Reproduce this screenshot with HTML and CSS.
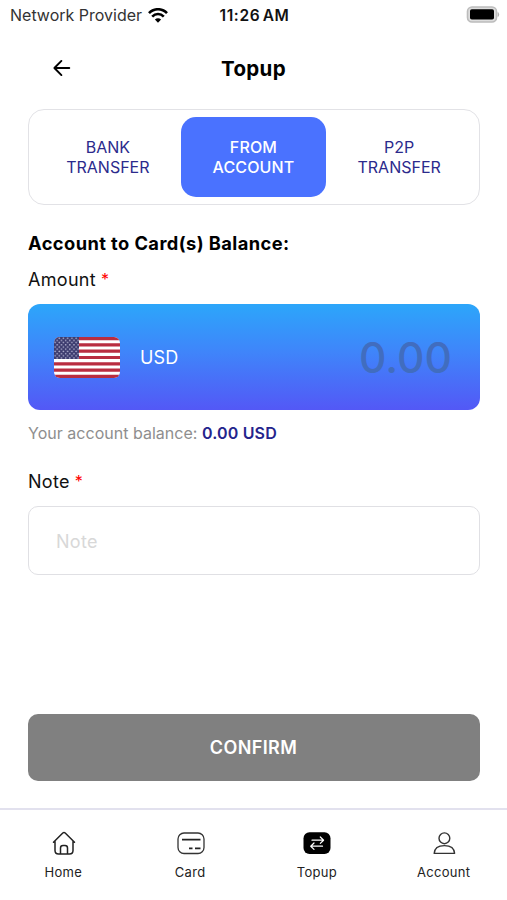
FILE: index.html
```html
<!DOCTYPE html>
<html lang="en">
<head>
<meta charset="utf-8">
<title>Topup</title>
<link rel="stylesheet" href="styles.css">
</head>
<body>
<div class="status">
  <div class="carrier"><span>Network Provider</span>
    <svg width="20" height="15" viewBox="0 0 20 15" fill="none" stroke="#000" stroke-width="2.6"><path d="M1 5.2C6-.1 14-.1 19 5.2M4.2 8.6c3.3-3.4 8.300-3.400 11.600 0"/><path d="M10 14.700L6.900 11.600c1.800-1.700 4.400-1.700 6.200 0z" fill="#000" stroke="none"/></svg>
  </div>
  <time class="clock">11:26 AM</time>
  <svg class="battery" width="34" height="18" viewBox="0 0 34 18"><rect x="1.500" y="1" width="29" height="15" rx="4.500" fill="#ddd" stroke="#bcbcbc" stroke-width="1.600"/><rect x="4" y="3.300" width="24" height="10.200" rx="1.800" fill="#000"/><path d="M32 6.500q1.500 2 0 4z" fill="#aaa" stroke="#aaa" stroke-width=".6"/></svg>
</div>
<header class="header">
  <svg class="back" width="18" height="18" viewBox="0 0 18 18" fill="none" stroke="#000" stroke-width="1.900" stroke-linecap="round" stroke-linejoin="round"><path d="M16.300 9H1.500M8.400 1.900L1.400 9l7 7.100"/></svg>
  <h1>Topup</h1>
</header>
<main class="content">
  <div class="tabs">
    <div class="tab">BANK<br>TRANSFER</div>
    <div class="tab active">FROM<br>ACCOUNT</div>
    <div class="tab">P2P<br>TRANSFER</div>
  </div>
  <h2>Account to Card(s) Balance:</h2>
  <div class="label amount-label"><span>Amount</span><span class="star">*</span></div>
  <div class="amount">
    <svg class="flag" width="66" height="41" viewBox="0 0 66 41">
      <defs>
        <clipPath id="round"><rect width="66" height="41" rx="6"/></clipPath>
        <pattern id="stars" width="4.200" height="4.400" patternUnits="userSpaceOnUse"><circle cx="1.100" cy="1.200" r=".85" fill="#b4b4d2"/><circle cx="3.200" cy="3.400" r=".85" fill="#b4b4d2"/></pattern>
      </defs>
      <g clip-path="url(#round)">
        <rect width="66" height="41" fill="#fff"/>
        <path d="M0 1.580h66M0 7.880h66M0 14.190h66M0 20.500h66M0 26.810h66M0 33.120h66M0 39.420h66" stroke="#b92d40" stroke-width="3.150"/>
        <rect width="25" height="22" fill="#3c3b6e"/>
        <rect width="25" height="22" fill="url(#stars)"/>
      </g>
    </svg>
    <span class="currency">USD</span>
    <span class="value">0.00</span>
  </div>
  <div class="balance">Your account balance: <strong>0.00 USD</strong></div>
  <div class="label note-label"><span>Note</span><span class="star">*</span></div>
  <div class="note">Note</div>
  <div class="confirm">CONFIRM</div>
</main>
<nav class="nav">
  <div class="item">
    <svg width="28" height="26" viewBox="0 0 28 26" fill="none" stroke="#222" stroke-width="1.500" stroke-linecap="round" stroke-linejoin="round"><path d="M4.500 12.200L13.800 3q1.200-1.100 2.400 0l9.300 9.200M6 11v9.500q0 3.500 3.500 3.500h11q3.500 0 3.500-3.500V11M11.500 24v-6q0-2.500 2.500-2.500h2q2.500 0 2.500 2.500v6"/></svg>
    <span>Home</span>
  </div>
  <div class="item">
    <svg class="card-icon" width="28" height="26" viewBox="0 0 28 26" fill="none" stroke="#333"><rect x="1" y="3" width="26" height="20.500" rx="6" stroke-width="1.300"/><path d="M5 9.700h18.500M12 18.300h3.500M18 18.300h5.500" stroke="#222" stroke-width="1.800"/></svg>
    <span>Card</span>
  </div>
  <div class="item">
    <svg width="28" height="26" viewBox="0 0 28 26" fill="none" stroke="#fff" stroke-width="1.200" stroke-linecap="round" stroke-linejoin="round"><rect x=".5" y="2.300" width="27" height="21.700" rx="6" fill="#000" stroke="none"/><path d="M9 10.200h11.500M17.300 7l3.300 3.200-3.300 3.200M19.500 16.200H7.800M11 13l-3.300 3.200 3.300 3.200"/></svg>
    <span>Topup</span>
  </div>
  <div class="item">
    <svg width="28" height="26" viewBox="0 0 28 26" fill="none" stroke="#333" stroke-width="1.400" stroke-linejoin="round"><circle cx="14.400" cy="8.300" r="5.400"/><path d="M4.200 23.400c.3-5.200 4.600-7.800 10.200-7.800s9.900 2.600 10.200 7.800z"/></svg>
    <span>Account</span>
  </div>
</nav>
</body>
</html>
```
FILE: styles.css
```css
* { box-sizing: border-box; }
body {
  margin: 0;
  height: 900px;
  display: flex;
  flex-direction: column;
  background: #fff;
  color: #111;
  font-family: Inter, "Liberation Sans", sans-serif;
  overflow: hidden;
}
.status {
  height: 30px;
  display: grid;
  grid-template-columns: 1fr auto 1fr;
  align-items: center;
  padding: 0 8px 0 10px;
  font-size: 16px;
}
.carrier { display: flex; align-items: center; gap: 6px; color: #333; }
.clock { font-weight: 600; font-size: 15.5px; letter-spacing: 0.6px; word-spacing: -2px; }
.battery { justify-self: end; margin: -1px -1px 0 0; }
.header {
  height: 76px;
  display: grid;
  grid-template-columns: 1fr auto 1fr;
  align-items: center;
}
.back { margin-left: 53px; }
h1 { margin: 0; font-size: 20.5px; font-weight: 650; letter-spacing: 0.3px; color: #000; }
.content { padding: 3px 27.5px 0; display: flex; flex-direction: column; }
.tabs {
  display: grid;
  grid-template-columns: repeat(3, 1fr);
  height: 95.5px;
  padding: 6.5px;
  border: 1.5px solid #e2e2e6;
  border-radius: 16px;
}
.tab {
  display: flex;
  align-items: center;
  justify-content: center;
  text-align: center;
  font-size: 16px;
  line-height: 20px;
  color: #2b2a8c;
  border-radius: 15px;
}
.active { background: #4a72ff; color: #fff; font-weight: 500; letter-spacing: 0.15px; }
h2 { margin: 26px 0 0 0.5px; font-size: 18.3px; line-height: 24px; font-weight: 650; letter-spacing: 0.42px; color: #000; }
.label {
  display: flex;
  padding-left: 0.5px;
  font-size: 18px;
  line-height: 24px;
  letter-spacing: 0.3px;
  white-space: nowrap;
}
.amount-label { margin-top: 13.5px; }
.star { margin: -1px 0 1px 5px; font-size: 16px; line-height: 24px; color: #f00; }
.amount {
  height: 106px;
  margin-top: 11.5px;
  border-radius: 12px;
  padding: 0 28px 0 26.5px;
  display: flex;
  align-items: center;
  color: #fff;
  background: linear-gradient(#2ca6fa, #3f85fa 45%, #5358f6);
}
.flag { margin: 1px 0 0; }
.currency { margin: 1px 0 0 20px; font-size: 18px; letter-spacing: 0.2px; }
.value { margin: 2px -0.5px 0 auto; font-size: 42.5px; font-weight: 500; color: #416dbf; }
.balance { margin: 11px 0 0 0.5px; font-size: 16px; line-height: 24px; letter-spacing: 0.02px; color: #8e8e8e; white-space: nowrap; }
.balance strong { color: #24248c; font-weight: 600; letter-spacing: 0.15px; }
.note-label { margin-top: 25px; }
.note {
  height: 69px;
  margin-top: 12.5px;
  padding: 2px 27.5px 0;
  display: flex;
  align-items: center;
  border: 1.5px solid #e0e0e4;
  border-radius: 10px;
  font-size: 18px;
  letter-spacing: 0.3px;
  color: #d8d8d8;
}
.confirm {
  height: 67.5px;
  margin-top: 138.5px;
  border-radius: 10px;
  background: #808080;
  color: #fff;
  font-size: 18px;
  font-weight: 600;
  letter-spacing: 0.4px;
  display: flex;
  align-items: center;
  justify-content: center;
}
.nav {
  margin-top: auto;
  height: 92px;
  border-top: 2px solid #e2e1ee;
  display: grid;
  grid-template-columns: repeat(4, 1fr);
}
.item {
  display: flex;
  flex-direction: column;
  align-items: center;
  padding-top: 20px;
  gap: 7px;
  font-size: 13px;
  line-height: 18px;
  letter-spacing: 0.3px;
  color: #222;
}
.card-icon { margin-left: 2px; }
```
